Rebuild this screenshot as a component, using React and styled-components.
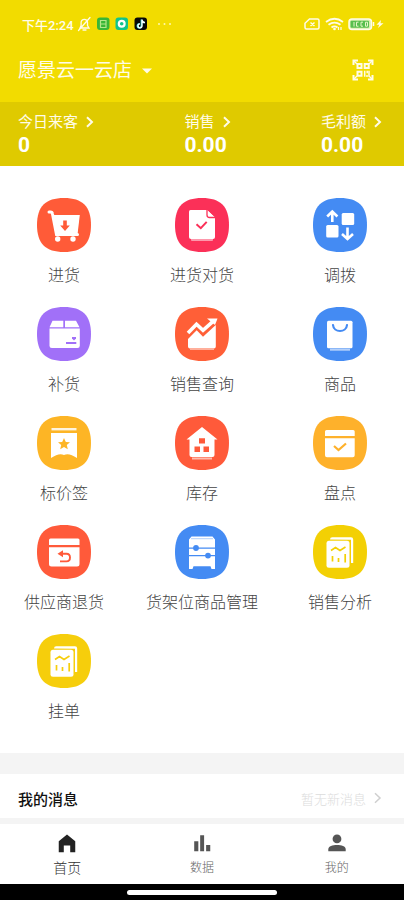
import React from "react";
import styled, { createGlobalStyle } from "styled-components";

const GlobalStyle = createGlobalStyle`
  * {
    box-sizing: border-box;
  }

  body {
    margin: 0;
    background: #fff;
    font-family: Roboto, "Noto Sans CJK SC", sans-serif;
  }

  a {
    color: inherit;
    text-decoration: none;
  }

  button {
    display: flex;
    align-items: center;
    padding: 0;
    border: none;
    background: none;
    color: inherit;
    font-family: inherit;
    cursor: pointer;
  }

  svg {
    display: block;
    flex: none;
  }
`;

const Page = styled.div`
  display: flex;
  flex-direction: column;
  min-height: 100vh;
  background: #f4f4f4;
`;

const Header = styled.header`
  background: #f2dc00;
  color: #fffce8;
`;

const StatusBar = styled.div`
  display: flex;
  align-items: center;
  justify-content: space-between;
  height: 48px;
  padding: 0 20px 0 22px;
  font-size: 13px;
  font-weight: 500;
`;

const StatusGroup = styled.div`
  display: flex;
  align-items: center;
  gap: 3px;
`;

const TitleBar = styled.div`
  display: flex;
  align-items: center;
  justify-content: space-between;
  height: 54px;
  padding: 0 30px 10px 18px;
`;

const StoreButton = styled.button`
  gap: 10px;
  padding-top: 2px;
  font-size: 19px;
  line-height: 28px;
`;

const Stats = styled.div`
  display: flex;
  justify-content: space-between;
  padding: 8px 22px 10px 18px;
  background: #dfca00;
`;

const Stat = styled.a`
  display: block;
`;

const StatLabel = styled.div`
  display: flex;
  align-items: center;
  gap: 8px;
  font-size: 15px;
  line-height: 24px;
`;

const StatValue = styled.div`
  color: #fff;
  font-size: 21px;
  font-weight: 700;
  line-height: 22px;
`;

const Menu = styled.main`
  display: grid;
  grid-template-columns: 1fr 2fr 1fr;
  row-gap: 20px;
  padding: 32px 18px 30px;
  background: #fff;
`;

const MenuItem = styled.a`
  display: flex;
  flex-direction: column;
  align-items: center;
  gap: 13px;
  color: #444;
  font-size: 16px;
  font-weight: 300;
  line-height: 22px;
  white-space: nowrap;
`;

const Messages = styled.a`
  display: flex;
  align-items: center;
  justify-content: space-between;
  height: 44px;
  margin: 21px 0 6px;
  padding: 4px 22px 0 18px;
  background: #fff;
`;

const MessagesTitle = styled.span`
  color: #111;
  font-size: 15px;
  font-weight: 500;
`;

const MessagesHint = styled.span`
  display: flex;
  align-items: center;
  gap: 8px;
  color: #dcdcdc;
  font-size: 13px;
  font-weight: 300;
`;

const TabBar = styled.nav`
  display: flex;
  flex: 1;
  background: #fff;
`;

const Tab = styled.a`
  display: flex;
  flex: 1;
  flex-direction: column;
  align-items: center;
  gap: 3px;
  padding: 9px 0 5px;
  color: ${({ $active }) => ($active ? "#333" : "#666")};
  font-size: ${({ $active }) => ($active ? "14px" : "12px")};
  font-weight: 300;
  line-height: 20px;
`;

const GestureBar = styled.div`
  display: flex;
  justify-content: center;
  padding: 6px 0 5px;
  background: #000;
`;

const GestureHandle = styled.div`
  width: 37%;
  height: 5px;
  border-radius: 3px;
  background: #fff;
`;

const Chevron = ({ color = "#fffce8", width = 2 }) => (
  <svg width="8" height="12" viewBox="0 0 8 12" fill="none" stroke={color} strokeWidth={width}>
    <path d="M1 1.200 6 6l-5 4.800" />
  </svg>
);

const LeftStatusIcons = () => (
  <svg width="96" height="16" viewBox="0 0 96 16">
    <g fill="none" stroke="#fffce8" strokeWidth="1.3" strokeLinecap="round">
      <path d="M3 12h9l-1.500-2.500V6.500a3.200 3.200 0 0 0-6.400 0v3L3 12zM6 14h3M13 1.500 1.500 14.500" />
    </g>
    <rect x="20" y="1.500" width="12.500" height="12.500" rx="3" fill="#39b637" />
    <path d="M23.500 4.500h5.500v7h-5.500zM23.500 8h5.500" fill="none" stroke="#b4e68a" strokeWidth="1.200" />
    <rect x="38.500" y="1.500" width="12.500" height="12.500" rx="3" fill="#10c48c" />
    <circle cx="44.700" cy="7.700" r="2.900" fill="none" stroke="#fff" strokeWidth="2.200" />
    <rect x="57.500" y="1.500" width="12.500" height="12.500" rx="3" fill="#080808" />
    <path d="M64.500 3.500v6.300a2 2 0 1 1-2-2M64.500 4c.4 1.700 1.500 2.500 3 2.600" fill="none" stroke="#3ee3df" strokeWidth="1.800" />
    <path d="M65 3.500v6.300a2 2 0 1 1-2-2M65 4c.4 1.700 1.500 2.500 3 2.600" fill="none" stroke="#fff" strokeWidth="1.300" />
    <g fill="#fff8ae">
      <circle cx="82" cy="8" r="1" />
      <circle cx="87.500" cy="8" r="1" />
      <circle cx="93" cy="8" r="1" />
    </g>
  </svg>
);

const RightStatusIcons = () => (
  <svg width="80" height="16" viewBox="0 0 80 16">
    <path
      d="M5.500 3h8q1.500 0 1.500 1.500v7q0 1.500-1.500 1.500h-11Q1 13 1 11.500V7.300zM6.500 6.500l4 3.500m0-3.500-4 3.500"
      fill="none"
      stroke="#fffce8"
      strokeWidth="1.500"
    />
    <g fill="none" stroke="#fffce8" strokeWidth="1.800">
      <path d="M22 6q8.500-6.500 17 0M24.500 8.800q6-4.500 12 0M27.500 11.400q3-2.200 6 0" />
    </g>
    <circle cx="30.500" cy="13" r="1.300" fill="#fffce8" />
    <path d="M34.500 11v3M37 11v3" stroke="#fffce8" strokeWidth="1.200" />
    <rect x="45" y="3" width="22.500" height="10.500" rx="3" fill="#d9f0b0" stroke="#fffce8" strokeWidth="1.500" />
    <rect x="46.500" y="4.700" width="18.500" height="7" rx="1" fill="#58bf4e" />
    <path d="M50 6v4.500M54.500 6.200h-2v4h2M59 6.200h-2v4h2M61.500 6.200h2v4h-2z" fill="none" stroke="#e6f6c8" strokeWidth="1" />
    <path d="M69.500 6v4" stroke="#fffce8" strokeWidth="1.500" />
    <path d="m77 4-4.500 4.800h2.700L74 12l5.500-4.800h-3z" fill="#fffce8" />
  </svg>
);

const ScanIcon = () => (
  <svg width="22" height="22" viewBox="0 0 22 22" fill="none" stroke="#fffce8" strokeWidth="2">
    <path d="M1.500 6V1.500H6M16 1.500h4.500V6M20.500 16v4.500H16M6 20.500H1.500V16" />
    <path d="M5.500 5h4v4h-4zM12.700 5h4v4h-4zM5.500 12.700h4v4h-4z" />
    <path d="M12.700 11.700v6M15.200 11.700v2.500M17 11.700v6M15 16v2" strokeWidth="1.500" />
    <path d="m2 2 3 3M20 2l-3 3M2 20l3-3M20 20l-3-3" strokeWidth="1.300" />
  </svg>
);

const reportGlyph = (c) => (
  <>
    <path d="M17 14.500q0-2.300 2.300-2.300H38q2.200 0 2.200 2.200V38H38V14.700z" fill="#fff" />
    <rect x="13.500" y="15.700" width="23" height="27" rx="2.500" fill="#fff" />
    <path d="m18 25.500 4.500-3 4.500 3 5.500-3.500" fill="none" stroke={c} strokeWidth="1.600" />
    <path d="M19.500 31v5.500M25.500 33v4M32.200 29v8.500" stroke={c} strokeWidth="1.700" />
  </>
);

// every glyph is drawn on a 54x54 tile and gets the tile colour for its cut-outs
const glyphs = {
  cart: (c) => (
    <>
      <path d="M12 14h1.500q1.700 0 2 2l4 20.500h21" fill="none" stroke="#fff" strokeWidth="3" strokeLinecap="round" />
      <path d="M15.500 17h27.300l-2.300 19.500h-22z" fill="#fff" />
      <circle cx="20.700" cy="41" r="2.700" fill="#fff" />
      <circle cx="36" cy="41" r="2.700" fill="#fff" />
      <path d="M26.200 22.500h3.600v5h3L28 33l-4.800-5.500h3z" fill={c} />
    </>
  ),
  document: (c) => (
    <>
      <rect x="16" y="39" width="22" height="4" rx="1" fill="#fff" opacity=".5" />
      <path d="M15.500 12H32l8 7.500V39q0 2-2 2H16q-2 0-2-2V13.500q0-1.500 1.500-1.500z" fill="#fff" />
      <path d="M32 12v5q0 2.500 2.500 2.500H40" fill="#fff" stroke={c} strokeWidth="1.300" />
      <path d="m21.500 26.300 4.300 3.900 5.900-6.300" fill="none" stroke={c} strokeWidth="2" />
    </>
  ),
  transfer: () => (
    <g fill="#fff">
      <rect x="28.700" y="15" width="12.500" height="12" rx="1.500" />
      <rect x="13.200" y="27" width="12.300" height="12.500" rx="1.500" />
      <path
        d="M19.300 24V14M14.200 18.500l5.100-5 5.100 5M34.500 29.500v11M29 36l5.500 5 5.500-5"
        fill="none"
        stroke="#fff"
        strokeWidth="2.600"
      />
    </g>
  ),
  box: (c) => (
    <>
      <path d="M15.500 13.700h10.800v6.500H12.500zM28 13.700h11l3.500 6.500H28z" fill="#fff" />
      <path d="M12.500 21.500h30.300v17.300q0 2.300-2.300 2.300H14.800q-2.300 0-2.300-2.300z" fill="#fff" />
      <path d="M35 30h4v1.500l-2 2-2-2z" fill={c} />
      <path d="M29 36h10.300" stroke={c} strokeWidth="2" />
    </>
  ),
  trend: () => (
    <>
      <path d="m13 26 8.500-8.700 6.500 6 9.500-8.500" fill="none" stroke="#fff" strokeWidth="3.600" />
      <path d="M32 11.500h10.500L40 18z" fill="#fff" />
      <path d="m13 32 8.700-8.700 6.300 6.500L40.800 18v21.500q0 2-2 2H15q-2 0-2-2z" fill="#fff" />
      <path d="M15 42.500h24" stroke="#fff" opacity=".5" />
    </>
  ),
  bag: (c) => (
    <>
      <rect x="14" y="13.700" width="25.500" height="27.500" rx="1.500" fill="#fff" />
      <path d="M17 42.700h20" stroke="#fff" strokeWidth="2" opacity=".6" />
      <path d="M20 18c.6 8 13.400 8 14 0" fill="none" stroke={c} strokeWidth="2.200" strokeLinecap="round" />
    </>
  ),
  tag: (c) => (
    <>
      <path d="M14.500 13.200h25" stroke="#fff" strokeWidth="2.400" opacity=".85" />
      <path d="M14 17h26v25q-8-5.500-13-3-5-2.500-13 3z" fill="#fff" />
      <path d="m27 22 1.800 3.900 4.200.4-3.200 2.800 1 4.200-3.800-2.200-3.800 2.200 1-4.200-3.200-2.800 4.200-.4z" fill={c} />
    </>
  ),
  house: (c) => (
    <>
      <path d="m27 11 15.500 12.500H39.500V39q0 2-2 2H16.500q-2 0-2-2V23.500h-3z" fill="#fff" />
      <path d="M17 42.500h20" stroke="#fff" strokeWidth="2" opacity=".6" />
      <path d="M24 22.300h6v5.200h-6zM19.500 30.500h5.500V36h-5.500zM28.500 30.500H34V36h-5.500z" fill={c} />
    </>
  ),
  check: (c) => (
    <>
      <path d="M13.500 14h26.700q1.500 0 1.500 1.500V20H12v-4.500q0-1.500 1.500-1.500zM12 22.200h29.700v17q0 2-2 2H14q-2 0-2-2z" fill="#fff" />
      <path d="m21 30 4.500 4 7.500-6.500" fill="none" stroke={c} strokeWidth="2.200" />
    </>
  ),
  refund: (c) => (
    <>
      <path d="M13.500 13.500H41q1.500 0 1.500 1.500v5H12v-5q0-1.500 1.500-1.500zM12 22.200h30.500V39q0 2.500-2.500 2.500H14.500Q12 41.500 12 39z" fill="#fff" />
      <path d="M25 28.800h4.500q3.500 0 3.500 3.800t-3.500 3.800H23" fill="none" stroke={c} strokeWidth="1.900" />
      <path d="m20.500 28.800 5.500-3.500v7z" fill={c} />
    </>
  ),
  shelf: (c) => (
    <>
      <path d="M16.500 11.500h21l2.500 3V44h-3.500l-1-2.700h-17l-1 2.700H14V14.500z" fill="#fff" />
      <path d="M16 13.700h22" stroke={c} strokeWidth="1" opacity=".4" />
      <path d="M14 23.200h26M14 30.600h26" stroke={c} strokeWidth="1.200" />
      <circle cx="21" cy="23" r="2.900" fill={c} />
      <circle cx="33" cy="30.600" r="2.900" fill={c} />
    </>
  ),
  report: reportGlyph,
};

const TileIcon = ({ glyph, color }) => (
  <svg width="54" height="54" viewBox="0 0 54 54">
    <path d="M27 0C45.500 0 54 8.500 54 27S45.500 54 27 54 0 45.500 0 27 8.500 0 27 0z" fill={color} />
    {glyphs[glyph](color)}
  </svg>
);

const stats = [
  { label: "今日来客", value: "0" },
  { label: "销售", value: "0.00" },
  { label: "毛利额", value: "0.00" },
];

const menu = [
  { label: "进货", glyph: "cart", color: "#ff5b38" },
  { label: "进货对货", glyph: "document", color: "#fb3058" },
  { label: "调拨", glyph: "transfer", color: "#448bf3" },
  { label: "补货", glyph: "box", color: "#a170f8" },
  { label: "销售查询", glyph: "trend", color: "#ff5f37" },
  { label: "商品", glyph: "bag", color: "#448bf3" },
  { label: "标价签", glyph: "tag", color: "#fdb525" },
  { label: "库存", glyph: "house", color: "#ff5a3a" },
  { label: "盘点", glyph: "check", color: "#feb12b" },
  { label: "供应商退货", glyph: "refund", color: "#ff5a3a" },
  { label: "货架位商品管理", glyph: "shelf", color: "#448bf3" },
  { label: "销售分析", glyph: "report", color: "#f3d004" },
  { label: "挂单", glyph: "report", color: "#f6ce0c" },
];

const tabs = [
  {
    label: "首页",
    active: true,
    icon: <path d="M3 21V9l9-7.500L21 9v12h-5.500v-7.500h-7V21z" fill="#222" />,
  },
  {
    label: "数据",
    icon: <path d="M3.500 9H8v11H3.500zM10 2.500h4.300V20H10zM16.500 13H21v7h-4.500z" fill="#555" />,
  },
  {
    label: "我的",
    icon: (
      <g fill="#555">
        <circle cx="12" cy="6.500" r="4.800" />
        <path d="M2.500 20v-2.500c0-6 19-6 19 0V20z" />
      </g>
    ),
  },
];

const App = () => {
  return (
    <Page>
      <GlobalStyle />
      <Header>
        <StatusBar>
          <StatusGroup>
            <span>下午2:24</span>
            <LeftStatusIcons />
          </StatusGroup>
          <RightStatusIcons />
        </StatusBar>
        <TitleBar>
          <StoreButton>
            愿景云一云店
            <svg width="10" height="6" viewBox="0 0 10 6">
              <path d="M0 .5h10L5 5.500z" fill="#fffce8" />
            </svg>
          </StoreButton>
          <button aria-label="扫码">
            <ScanIcon />
          </button>
        </TitleBar>
        <Stats>
          {stats.map((stat) => (
            <Stat key={stat.label} href="#">
              <StatLabel>
                {stat.label}
                <Chevron />
              </StatLabel>
              <StatValue>{stat.value}</StatValue>
            </Stat>
          ))}
        </Stats>
      </Header>
      <Menu>
        {menu.map((item) => (
          <MenuItem key={item.label} href="#">
            <TileIcon glyph={item.glyph} color={item.color} />
            {item.label}
          </MenuItem>
        ))}
      </Menu>
      <Messages href="#">
        <MessagesTitle>我的消息</MessagesTitle>
        <MessagesHint>
          暂无新消息
          <Chevron color="#cfcfcf" width={1.5} />
        </MessagesHint>
      </Messages>
      <TabBar>
        {tabs.map((tab) => (
          <Tab key={tab.label} href="#" $active={tab.active}>
            <svg width="22" height="22" viewBox="0 0 24 24">
              {tab.icon}
            </svg>
            {tab.label}
          </Tab>
        ))}
      </TabBar>
      <GestureBar>
        <GestureHandle />
      </GestureBar>
    </Page>
  );
};

export default App;
